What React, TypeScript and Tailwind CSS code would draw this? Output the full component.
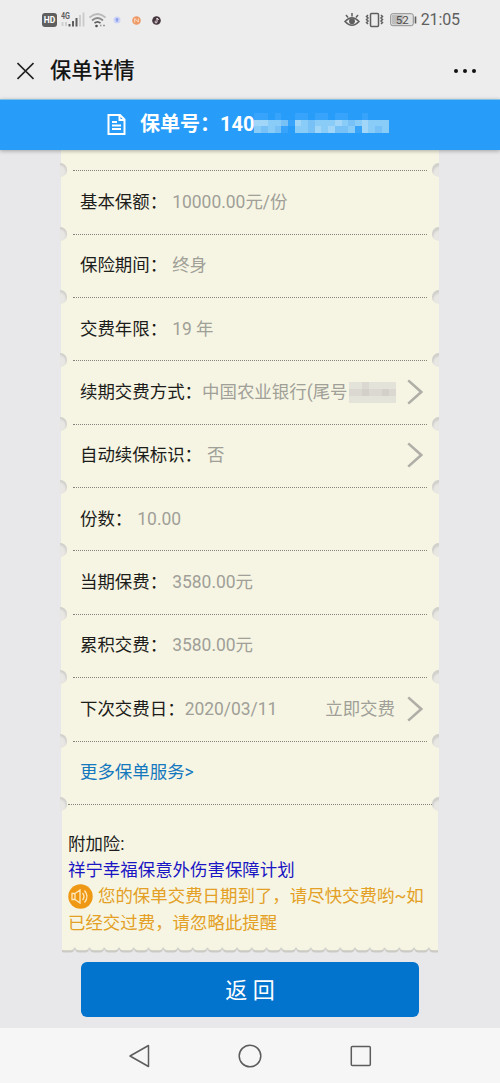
import React from 'react';

interface PolicyRow {
  label: string;
  value: string;
  gap?: boolean;
  action?: string;
  arrow?: boolean;
  masked?: boolean;
}

const ROWS: PolicyRow[] = [
  { label: '基本保额：', value: '10000.00元/份', gap: true },
  { label: '保险期间：', value: '终身', gap: true },
  { label: '交费年限：', value: '19 年', gap: true },
  { label: '续期交费方式：', value: '中国农业银行(尾号', arrow: true, masked: true },
  { label: '自动续保标识：', value: '否', gap: true, arrow: true },
  { label: '份数：', value: '10.00', gap: true },
  { label: '当期保费：', value: '3580.00元', gap: true },
  { label: '累积交费：', value: '3580.00元', gap: true },
  { label: '下次交费日：', value: '2020/03/11', action: '立即交费', arrow: true },
];

// Mosaic shades, one string per row of tiles
const NUMBER_TILES = [
  'bb0b00bb0bb0bb00b000',
  'eeddcbedcdddedcdeddd',
  'dcdcb0ddcedeccdbedcd',
];
const ACCOUNT_TILES = ['1121111', '2232232', '1111111'];

const TILE: Record<string, string> = {
  '0': 'bg-[#279cf9]',
  b: 'bg-[#37a3fa]',
  c: 'bg-[#78c1f7]',
  d: 'bg-[#8accf8]',
  e: 'bg-[#a2d6f8]',
  '1': 'bg-[#e4e3d9]',
  '2': 'bg-[#dad8d0]',
  '3': 'bg-[#d2d0c9]',
};

const Mosaic: React.FC<{ rows: string[]; className: string }> = ({ rows, className }) => (
  <div className={`flex flex-col shrink-0 ${className}`}>
    {rows.map((row, i) => (
      <div key={i} className="flex flex-1">
        {row.split('').map((t, j) => (
          <span key={j} className={`flex-1 ${TILE[t]}`} />
        ))}
      </div>
    ))}
  </div>
);

const Notch: React.FC<{ side: 'left' | 'right' }> = ({ side }) => (
  <span
    className={`absolute -bottom-[6px] w-[7px] h-[14px] bg-[#e8e7e4] ${
      side === 'left'
        ? '-left-px rounded-r-full shadow-[inset_-1px_2px_2px_#d0cfca]'
        : 'right-0 rounded-l-full shadow-[inset_1px_3px_2px_#d0cfca]'
    }`}
  />
);

const Divider: React.FC<{ wide?: boolean }> = ({ wide }) => (
  <>
    <span className={`absolute bottom-0 border-b border-dotted border-[#85847a] ${wide ? 'inset-x-[7px]' : 'inset-x-3'}`} />
    <Notch side="left" />
    <Notch side="right" />
  </>
);

const Arrow = () => (
  <svg className="w-4 h-[26px] shrink-0" viewBox="0 0 16 26" fill="none" stroke="#b0afa7" strokeWidth="2.6">
    <path d="M1.2 1.4 14.2 13 1.2 24.6" />
  </svg>
);

const StatusBar = () => (
  <div className="flex items-center h-10 pl-[42px] pr-10 text-[#5f5f5f]">
    <div className="w-[15px] h-[14px] rounded-[3px] bg-[#5f5f5f] text-white text-[8.5px] font-bold flex items-center justify-center">HD</div>
    <svg className="ml-1 w-6 h-5" viewBox="0 0 24 20">
      <text x="0" y="8.5" fontSize="9" fontWeight="700" fill="#5f5f5f" textLength="9" lengthAdjust="spacingAndGlyphs">4G</text>
      <path d="M1.500 12v4M5 12v4" stroke="#cfcfcf" strokeWidth="2" />
      <path d="M8.500 14v2.500M12 11v5.500M15.500 8v8.500" stroke="#5f5f5f" strokeWidth="2" />
      <path d="M19 5v11.500M22.500 2.500v14" stroke="#cacaca" strokeWidth="1.800" />
    </svg>
    <svg className="ml-1 w-[17px] h-[15px]" viewBox="0 0 17 15" fill="none" strokeWidth="1.700">
      <path d="M.5 4.500Q8.500-2.500 16.500 4.500" stroke="#b9b9b9" />
      <path d="M3 7.500Q8.500 2.500 14 7.500" stroke="#8a8a8a" />
      <path d="M5.500 10.200Q8.500 7.500 11.500 10.200" stroke="#5f5f5f" />
      <circle cx="7.500" cy="13" r="1.300" fill="#4c4c4c" />
      <path d="M11 12.500h1.500M14 12.500h2" stroke="#999" strokeWidth="1.500" />
    </svg>
    <svg className="ml-[7px] w-[8px] h-[8px]" viewBox="0 0 8 8">
      <circle cx="4" cy="4" r="3.500" fill="#cdd4f5" />
      <path d="M4 2v4M2.500 3.500h3" stroke="#8c9fee" strokeWidth="1.500" />
    </svg>
    <svg className="ml-[11px] w-[9px] h-[9px]" viewBox="0 0 9 9">
      <circle cx="4.500" cy="4.500" r="4.300" fill="#ee9a67" />
      <path d="M2.700 6.500v-4l3.600 3.500v-3.500" fill="none" stroke="#fbdcc8" strokeWidth="1" />
    </svg>
    <svg className="ml-[11px] w-[9px] h-[9px]" viewBox="0 0 9 9">
      <circle cx="4.500" cy="4.500" r="4.300" fill="#46363e" />
      <path d="M5 2v4a1 1 0 1 1-1.300-1M5 2q.3 1.500 1.800 1.500" fill="none" stroke="#f7e9ef" strokeWidth="1" />
    </svg>
    <svg className="ml-auto w-4 h-4 shrink-0" viewBox="0 0 16 16" fill="none" stroke="#5f5f5f" strokeWidth="1.500">
      <path d="M1 9.500Q8 2 15 9.500 8 17 1 9.500ZM8 4.500V1M4 5.500 2 3M12 5.500 14 3" />
      <circle cx="8" cy="9.300" r="2.200" fill="#5f5f5f" />
    </svg>
    <svg className="ml-[5px] w-[19px] h-4 shrink-0" viewBox="0 0 19 16" fill="none" stroke="#5f5f5f" strokeWidth="1.500">
      <rect x="5.500" y="1.500" width="8" height="13" rx="1" />
      <path d="M3 3 1.500 4.500 3 6 1.500 7.500 3 9 1.500 10.500 3 12M16 3l1.500 1.500L16 6l1.500 1.500L16 9l1.500 1.500L16 12" />
    </svg>
    <svg className="ml-[6px] w-[27px] h-[14px] shrink-0" viewBox="0 0 27 14">
      <rect x=".7" y=".7" width="22.600" height="12" rx="2" fill="#e2e2e2" stroke="#8e8e8e" />
      <rect x="2" y="2" width="11" height="9.400" fill="#bdbdbd" />
      <path d="M25.500 3.500v7" stroke="#5f5f5f" strokeWidth="1.600" />
      <text x="12.300" y="10.800" fontSize="11.500" textAnchor="middle" fill="#4d4d4d">52</text>
    </svg>
    <span className="ml-[4px] text-[16px] leading-none tracking-[-0.1px] shrink-0">21:05</span>
  </div>
);

const NavBar = () => (
  <div className="h-[55px] bg-[#f6f6f6] flex justify-center gap-[86px] items-center">
    <svg className="w-6 h-6" viewBox="0 0 24 24" fill="none" stroke="#5c5c5c" strokeWidth="1.500" strokeLinejoin="round">
      <path d="M20.500 1.500v21L2 12Z" />
    </svg>
    <svg className="w-6 h-6" viewBox="0 0 24 24" fill="none" stroke="#5c5c5c" strokeWidth="1.500">
      <circle cx="12" cy="12" r="10.800" />
    </svg>
    <svg className="w-6 h-6" viewBox="0 0 24 24" fill="none" stroke="#5c5c5c" strokeWidth="1.500">
      <rect x="3.300" y="2.500" width="19" height="19" rx="1" />
    </svg>
  </div>
);

export default function App() {
  return (
    <div className="w-[500px] h-[1083px] overflow-hidden flex flex-col bg-[#e8e8ea] text-[17.45px] leading-[26px] font-[Roboto,'Noto_Sans_CJK_SC',sans-serif]">
      <header className="h-[99px] shrink-0 bg-[#ededed]">
        <StatusBar />
        <div className="h-[61px] flex items-center pl-[17px] pr-[24px] text-[#151515]">
          <svg className="w-[17px] h-[18px]" viewBox="0 0 17 18" stroke="#222" strokeWidth="1.600">
            <path d="M.5 1 16.500 17M16.500 1 .5 17" />
          </svg>
          <h1 className="ml-4 text-[21.2px] font-medium leading-none">保单详情</h1>
          <svg className="ml-auto w-[22px] h-1" viewBox="0 0 22 4" fill="#111">
            <circle cx="2" cy="2" r="2" />
            <circle cx="11" cy="2" r="2" />
            <circle cx="20" cy="2" r="2" />
          </svg>
        </div>
      </header>

      <div className="relative z-10 h-[51px] shrink-0 border-t border-[#7fc0e4] bg-[#279cf9] shadow-[0_1px_4px_#00000050] flex items-center pl-[107px] pb-[2px] text-white">
        <svg className="w-[19px] h-[21px]" viewBox="0 0 18 21" fill="none" stroke="#fff" strokeWidth="2">
          <path d="M1 1h11.500L17 5.500V20H1ZM12 1v5h5M4.500 8h5M4.500 11.500h9M4.500 15h9" />
        </svg>
        <span className="ml-[14px] text-[20px] font-bold whitespace-nowrap">保单号：140</span>
        <Mosaic rows={NUMBER_TILES} className="w-[134px] h-5 mb-[2px]" />
      </div>

      <main className="flex-1 min-h-0">
        <div className="mx-[61px] bg-[#f6f5e3]">
          <div className="relative h-[21.3px]">
            <Divider />
          </div>
          {ROWS.map((row) => (
            <div key={row.label} className="relative h-[63.36px] pl-[19px] pr-[16px] pb-[2px] flex items-center whitespace-nowrap">
              <span className="text-[#1c1c1a]">{row.label}</span>
              <span className={`text-[#a09f98] ${row.gap ? 'ml-[5px]' : ''}`}>{row.value}</span>
              {row.masked && <Mosaic rows={ACCOUNT_TILES} className="w-[47px] h-[21px] ml-px" />}
              <div className="ml-auto flex items-center gap-3 text-[#a09f98]">
                {row.action}
                {row.arrow && <Arrow />}
              </div>
              <Divider />
            </div>
          ))}
          <div className="relative h-[63.36px] pl-[19px] pb-[2px] flex items-center">
            <a className="text-[#1478be]">更多保单服务&gt;</a>
            <Divider wide />
          </div>
        </div>

        <div className="mx-[62px] h-[141px] bg-[#f6f5e3] pt-[26px] pl-[6px]">
          <div className="text-[#1c1c1a]">附加险:</div>
          <div className="text-[#1b16c4]">祥宁幸福保意外伤害保障计划</div>
          <div className="text-[#e3a025] leading-[27px] whitespace-nowrap">
            <div className="flex items-center">
              <svg className="w-[25px] h-[25px] mr-[5px]" viewBox="0 0 25 25" fill="none" stroke="#ffe9c0" strokeWidth="1.300">
                <circle cx="12.500" cy="12.500" r="12.200" fill="#ee9814" stroke="none" />
                <path d="M4 9.500h3v6H4ZM7 9.500 12 6v13l-5-3.500M14.500 9q3 3.500 0 7M16.500 6.500q5 6 0 12" />
              </svg>
              <span>您的保单交费日期到了，请尽快交费哟~如</span>
            </div>
            <div>已经交过费，请忽略此提醒</div>
          </div>
        </div>
        <svg className="block mx-[62px] w-[376px] h-[7px]" viewBox="0 0 376 7">
          <defs>
            <pattern id="scallop" width="14.750" height="7" x="-2" patternUnits="userSpaceOnUse">
              <path d="M0 3Q1.500 6.500 4 6.500H10.750Q13.250 6.500 14.750 3V0H0Z" fill="#cbcac4" />
              <path d="M0 1Q1.500 4.300 4 4.300H10.750Q13.250 4.300 14.750 1V0H0Z" fill="#f6f5e3" />
            </pattern>
          </defs>
          <rect width="376" height="7" fill="url(#scallop)" />
        </svg>

        <button className="block mx-auto mt-[9.3px] w-[338px] h-[55px] pt-[2px] rounded-md bg-[#0274ce] text-white text-[22px]">返 回</button>
      </main>

      <NavBar />
    </div>
  );
}
